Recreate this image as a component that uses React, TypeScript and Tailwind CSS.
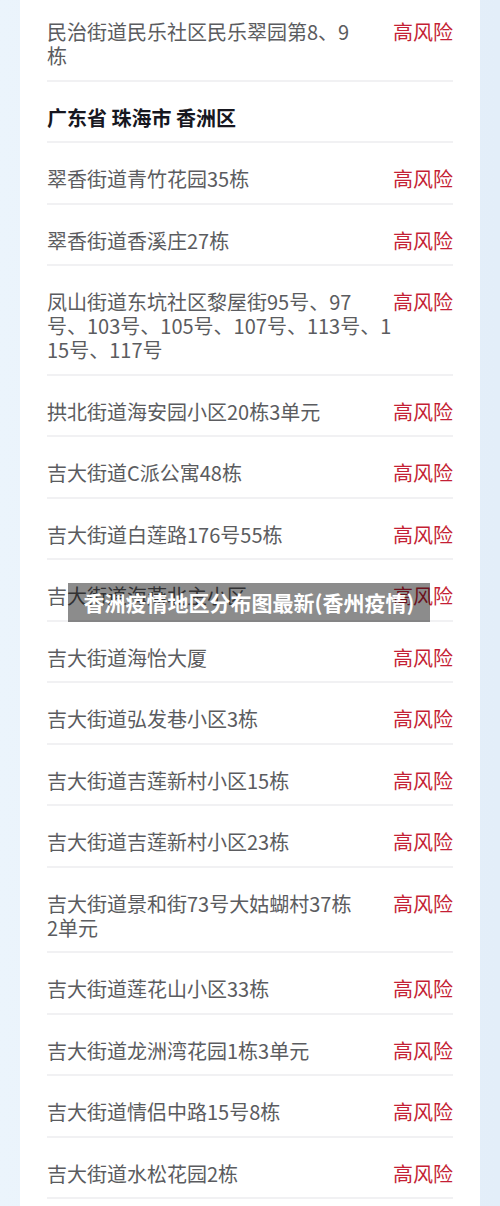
import React from "react";

type Row = { lines: string[]; header?: boolean };

const rows: Row[] = [
  { lines: ["民治街道民乐社区民乐翠园第8、9", "栋"] },
  { lines: ["广东省 珠海市 香洲区"], header: true },
  { lines: ["翠香街道青竹花园35栋"] },
  { lines: ["翠香街道香溪庄27栋"] },
  { lines: ["凤山街道东坑社区黎屋街95号、97", "号、103号、105号、107号、113号、1", "15号、117号"] },
  { lines: ["拱北街道海安园小区20栋3单元"] },
  { lines: ["吉大街道C派公寓48栋"] },
  { lines: ["吉大街道白莲路176号55栋"] },
  { lines: ["吉大街道海燕北主小区"] },
  { lines: ["吉大街道海怡大厦"] },
  { lines: ["吉大街道弘发巷小区3栋"] },
  { lines: ["吉大街道吉莲新村小区15栋"] },
  { lines: ["吉大街道吉莲新村小区23栋"] },
  { lines: ["吉大街道景和街73号大姑蝴村37栋", "2单元"] },
  { lines: ["吉大街道莲花山小区33栋"] },
  { lines: ["吉大街道龙洲湾花园1栋3单元"] },
  { lines: ["吉大街道情侣中路15号8栋"] },
  { lines: ["吉大街道水松花园2栋"] },
  { lines: ["吉大街道海滨南路1号"] },
];

const font = { fontFamily: '"Noto Sans CJK SC", "Noto Sans", sans-serif' };

export default function App() {
  return (
    <div
      className="relative w-[500px] h-[1206px] overflow-hidden bg-gradient-to-r from-[#ebf4fc] to-[#e3eef9]"
      style={font}
    >
      <div className="mx-[20px] -mt-[4px] bg-white px-[27px]">
        {rows.map((r, i) => (
          <div
            key={i}
            className="flex items-start justify-between pt-[24px] pb-[11.5px] border-b-2 border-[#f1f1f3]"
          >
            {r.header ? (
              <div className="text-[20px] leading-[24px] font-bold text-[#17171f]">
                {r.lines[0]}
              </div>
            ) : (
              <>
                <div className="text-[20px] leading-[24px] text-[#5b5c60] whitespace-nowrap">
                  {r.lines.map((l, j) => (
                    <div key={j}>{l}</div>
                  ))}
                </div>
                <div className="text-[20px] leading-[24px] text-[#c41f35] whitespace-nowrap">
                  高风险
                </div>
              </>
            )}
          </div>
        ))}
      </div>
      <div className="absolute left-[68px] top-[583px] w-[362px] h-[39px] bg-black/45 flex items-center justify-center">
        <span className="text-white font-bold text-[21px] leading-none">
          香洲疫情地区分布图最新(香州疫情)
        </span>
      </div>
    </div>
  );
}
